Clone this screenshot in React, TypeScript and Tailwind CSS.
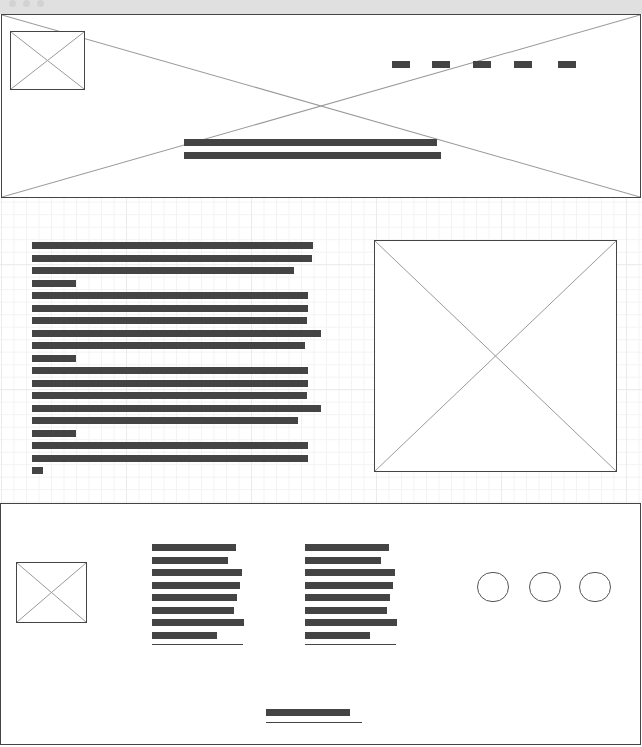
import React from "react";

const XBox = ({ className = "" }: { className?: string }) => (
  <div className={`relative border border-[#444] bg-white ${className}`}>
    <svg className="absolute inset-0 w-full h-full" preserveAspectRatio="none" viewBox="0 0 100 100">
      <line x1="0" y1="0" x2="100" y2="100" stroke="#999" strokeWidth="1" vectorEffect="non-scaling-stroke" />
      <line x1="100" y1="0" x2="0" y2="100" stroke="#999" strokeWidth="1" vectorEffect="non-scaling-stroke" />
    </svg>
  </div>
);

const Bar = ({ w }: { w: number }) => (
  <div className="h-[12.5px]">
    <div className="h-[7px] bg-[#444]" style={{ width: w }} />
  </div>
);

const contentLines = [281, 280, 262, 44, 276, 276, 275, 289, 273, 44, 276, 276, 275, 289, 266, 44, 276, 276, 11];
const footLines = [84, 76, 90, 88, 85, 82, 92, 65];

const FootCol = ({ className = "" }: { className?: string }) => (
  <div className={`flex flex-col ${className}`}>
    {footLines.map((w, i) => (
      <Bar key={i} w={w} />
    ))}
    <div className="h-px w-[91px] bg-[#444]" />
  </div>
);

export default function App() {
  return (
    <div className="w-[642px] h-[747px] bg-white overflow-hidden font-['Liberation_Sans',sans-serif]">
      {/* title bar */}
      <div className="h-[14px] bg-[#e0e0e0] flex items-start pl-[9px] gap-[7px] pt-0">
        <div className="w-[7px] h-[7px] rounded-full bg-[#d2d2d2]" />
        <div className="w-[7px] h-[7px] rounded-full bg-[#d2d2d2]" />
        <div className="w-[7px] h-[7px] rounded-full bg-[#d2d2d2]" />
      </div>

      {/* header */}
      <div className="relative ml-[1px] w-[640px] h-[184px] border border-[#444] bg-white">
        <svg className="absolute inset-0 w-full h-full" preserveAspectRatio="none" viewBox="0 0 100 100">
          <line x1="0" y1="0" x2="100" y2="100" stroke="#999" strokeWidth="1" vectorEffect="non-scaling-stroke" />
          <line x1="100" y1="0" x2="0" y2="100" stroke="#999" strokeWidth="1" vectorEffect="non-scaling-stroke" />
        </svg>
        <div className="relative flex flex-col pl-[8px] pt-[16px]">
          <div className="flex items-start">
            <XBox className="w-[75px] h-[59px]" />
            <div className="flex mt-[30px] ml-[307px]">
              <div className="w-[18px] h-[7px] bg-[#444]" />
              <div className="w-[18px] h-[7px] bg-[#444] ml-[22px]" />
              <div className="w-[18px] h-[7px] bg-[#444] ml-[23px]" />
              <div className="w-[18px] h-[7px] bg-[#444] ml-[23px]" />
              <div className="w-[18px] h-[7px] bg-[#444] ml-[26px]" />
            </div>
          </div>
          <div className="flex flex-col ml-[174px] mt-[49px] gap-[6px]">
            <div className="w-[253px] h-[7px] bg-[#444]" />
            <div className="w-[257px] h-[7px] bg-[#444]" />
          </div>
        </div>
      </div>

      {/* content */}
      <div className="h-[305px] flex items-start pt-[42px] pl-[32px] bg-white bg-[linear-gradient(to_right,#ebebeb_1px,transparent_1px),linear-gradient(to_bottom,#ebebeb_1px,transparent_1px),linear-gradient(to_right,#f3f3f3_1px,transparent_1px),linear-gradient(to_bottom,#f3f3f3_1px,transparent_1px)] bg-[size:125px_125px,125px_125px,12.5px_12.5px,12.5px_12.5px] bg-[position:1px_66.2px,1px_66.2px,1px_3.7px,1px_3.7px]">
        <div className="flex flex-col mt-[2px] w-[342px]">
          {contentLines.map((w, i) => (
            <Bar key={i} w={w} />
          ))}
        </div>
        <XBox className="w-[243px] h-[232px]" />
      </div>

      {/* footer */}
      <div className="w-[641px] h-[242px] border border-[#444] bg-white flex flex-col">
        <div className="flex items-start pt-[40px] pl-[15px]">
          <XBox className="w-[71px] h-[61px] mt-[18px]" />
          <FootCol className="ml-[65px] w-[153px]" />
          <FootCol className="w-[172px]" />
          <div className="flex mt-[28px]">
            <div className="w-[32px] h-[30px] rounded-full border border-[#555]" />
            <div className="w-[32px] h-[30px] rounded-full border border-[#555] ml-[20px]" />
            <div className="w-[32px] h-[30px] rounded-full border border-[#555] ml-[18px]" />
          </div>
        </div>
        <div className="flex flex-col ml-[265px] mt-[64px] gap-[6px]">
          <div className="w-[84px] h-[7px] bg-[#444]" />
          <div className="w-[96px] h-px bg-[#444]" />
        </div>
      </div>
    </div>
  );
}
